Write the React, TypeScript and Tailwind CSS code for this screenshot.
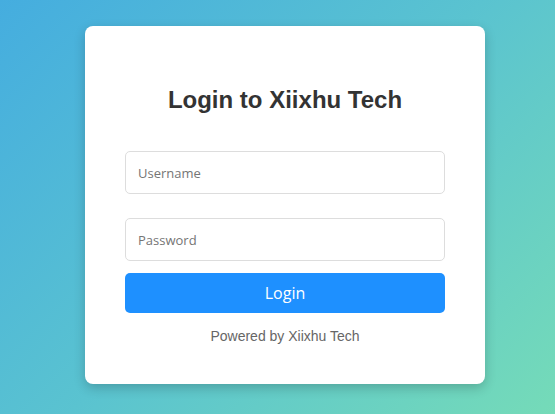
import React from 'react';

export default function App() {
  return (
    <div className="min-h-[414px] w-full flex justify-center items-start pt-[26px] pl-[15px] bg-[linear-gradient(135deg,#45addf_0%,#5ac3d0_50%,#75dbb8_100%)]">
      <div className="w-[400px] h-[358px] bg-white rounded-[8px] shadow-[0_4px_12px_rgba(0,0,0,0.2)] px-[40px] pt-[60px] flex flex-col">
        <h2 className="text-[24px] leading-[28px] font-bold text-[#333] text-center font-['Liberation_Sans',Arial,sans-serif]">
          Login to Xiixhu Tech
        </h2>
        <form className="flex flex-col mt-[37px]" onSubmit={e => e.preventDefault()}>
          <input
            type="text"
            placeholder="Username"
            className="h-[43px] w-full border border-[#ddd] rounded-[5px] px-[12px] text-[13px] text-[#333] placeholder:text-[#757575] font-['Open_Sans',sans-serif] outline-none"
          />
          <input
            type="password"
            placeholder="Password"
            className="h-[43px] w-full mt-[24px] border border-[#ddd] rounded-[5px] px-[12px] text-[13px] text-[#333] placeholder:text-[#757575] font-['Open_Sans',sans-serif] outline-none"
          />
          <button
            type="submit"
            className="h-[40px] w-full mt-[12px] bg-[#1e90ff] text-white rounded-[5px] text-[16px] font-['Open_Sans',sans-serif]"
          >
            Login
          </button>
        </form>
        <p className="mt-[15px] text-center text-[14px] leading-[16px] text-[#666] font-['Liberation_Sans',Arial,sans-serif]">
          Powered by Xiixhu Tech
        </p>
      </div>
    </div>
  );
}
